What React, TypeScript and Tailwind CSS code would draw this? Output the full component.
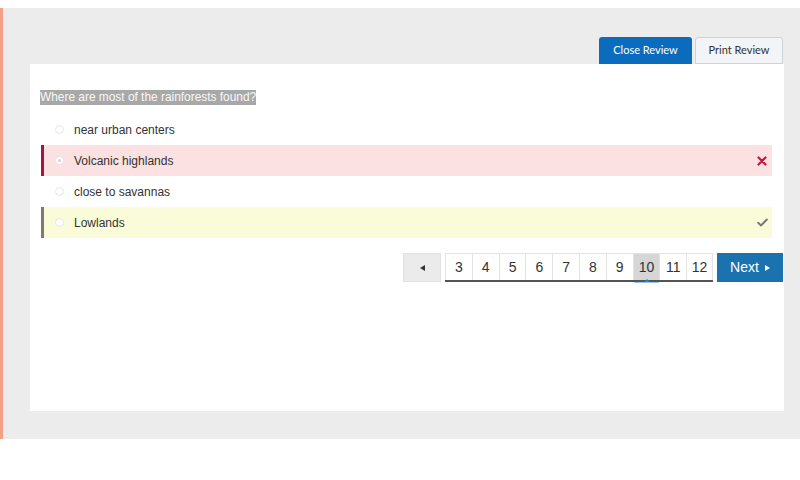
import React from 'react';

const options = [
  { label: 'near urban centers', state: 'none' },
  { label: 'Volcanic highlands', state: 'wrong' },
  { label: 'close to savannas', state: 'none' },
  { label: 'Lowlands', state: 'right' },
];

const pages = [3, 4, 5, 6, 7, 8, 9, 10, 11, 12];

function OptionRow({ label, state }: { label: string; state: string }) {
  const rowCls =
    state === 'wrong'
      ? 'bg-[#fbe1e1] border-l-[3px] border-[#a8133f]'
      : state === 'right'
        ? 'bg-[#fafcd9] border-l-[3px] border-[#7b7b72]'
        : 'border-l-[3px] border-transparent';
  return (
    <div className={`flex items-center h-[31px] pl-[11px] pr-[4px] ${rowCls}`}>
      <span className="flex items-center justify-center w-[9px] h-[9px] rounded-full border border-[#e6e6e6] bg-white">
        {state === 'wrong' && <span className="w-[3px] h-[3px] rounded-full bg-[#e4cccc]" />}
      </span>
      <span className="ml-[10px] text-[12px] text-[#333]">{label}</span>
      <span className="ml-auto w-[12px] flex justify-center">
        {state === 'wrong' && (
          <svg width="10" height="10" viewBox="0 0 10 10">
            <path d="M1.5 1.5 L8.5 8.5 M8.5 1.5 L1.5 8.5" stroke="#c8173f" strokeWidth="2.2" strokeLinecap="round" />
          </svg>
        )}
        {state === 'right' && (
          <svg width="11" height="9" viewBox="0 0 11 9">
            <path d="M1.2 4.8 L4 7.5 L9.8 1.5" stroke="#7a7a72" strokeWidth="2" fill="none" strokeLinecap="round" strokeLinejoin="round" />
          </svg>
        )}
      </span>
    </div>
  );
}

export default function App() {
  return (
    <div className="w-[800px] h-[480px] bg-white pt-[8px]" style={{ fontFamily: '"Liberation Sans", Arial, sans-serif' }}>
      <div className="h-[431px] bg-[#ececec] border-l-[3px] border-[#f4a088] pl-[27px] pr-[16px] pt-[29px] flex flex-col">
        <div className="flex justify-end gap-[3px] pr-[1px]" style={{ fontFamily: 'Lato, sans-serif' }}>
          <button className="w-[93px] h-[27px] rounded-t-[3px] bg-[#0b6cbd] text-white text-[11px]">Close Review</button>
          <button className="w-[88px] h-[27px] rounded-t-[3px] bg-[#f2f4f8] border border-[#cdd2da] text-[#333] text-[11px]">
            Print Review
          </button>
        </div>
        <div className="bg-white h-[347px] pl-[11px] pr-[12px] pt-[20px]">
          <div>
            <span className="bg-[#a8a8a8] text-[#f8f8f8] text-[11.9px] leading-[15px] inline-block -ml-[1px]">
              Where are most of the rainforests found?
            </span>
          </div>
          <div className="mt-[6px] flex flex-col">
            {options.map(o => (
              <OptionRow key={o.label} label={o.label} state={o.state} />
            ))}
          </div>
          <div className="mt-[15px] flex justify-end items-start gap-[4px] -mr-[11px]">
            <button className="w-[38px] h-[29px] bg-[#ebebeb] border border-[#e2e2e2] flex items-center justify-center">
              <svg width="5" height="6" viewBox="0 0 5 6">
                <path d="M5 0 L0 3 L5 6 Z" fill="#333" />
              </svg>
            </button>
            <div className="flex border-b-[2px] border-[#555] h-[29px]">
              {pages.map(p => (
                <div
                  key={p}
                  className={`relative w-[26.8px] h-full flex items-center justify-center text-[14px] text-[#333] border-l border-t border-[#e3e3e3] last:border-r ${p === 10 ? 'bg-[#d6d6d6]' : 'bg-white'}`}
                >
                  {p}
                  {p === 10 && (
                    <span className="absolute -bottom-[3px] left-1/2 -translate-x-1/2 w-0 h-0 border-l-[4px] border-r-[4px] border-b-[4px] border-l-transparent border-r-transparent border-b-[#2d7fd0]" />
                  )}
                  {p === 10 && <span className="absolute -bottom-[3px] left-0 right-0 h-[1px] bg-[#9cc6ee]" />}
                </div>
              ))}
            </div>
            <button className="w-[66px] h-[29px] bg-[#1a73ae] text-white text-[14px] flex items-center justify-center gap-[6px]">
              Next
              <svg width="5" height="6" viewBox="0 0 5 6">
                <path d="M0 0 L5 3 L0 6 Z" fill="#fff" />
              </svg>
            </button>
          </div>
        </div>
      </div>
    </div>
  );
}
